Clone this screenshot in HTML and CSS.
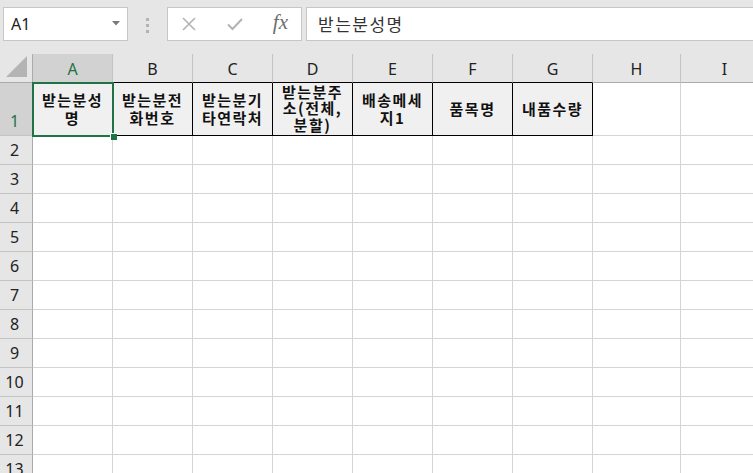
FILE: index.html
```html
<!DOCTYPE html>
<html>
<head>
  <link rel="stylesheet" href="styles.css">
</head>
<body>
  <div class="topbar">
    <div class="namebox">
      <span>A1</span>
      <svg class="caret" width="8" height="5" viewBox="0 0 8 5"><polygon points="0,0 8,0 4,4.5" fill="#7a7a7a"/></svg>
    </div>
    <div class="grip"><i></i><i></i><i></i></div>
    <div class="fbuttons">
      <svg width="16" height="16" viewBox="0 0 16 16"><path d="M2 2 L14 14 M14 2 L2 14" stroke="#b3b3b3" stroke-width="1.6" fill="none"/></svg>
      <svg width="18" height="16" viewBox="0 0 18 16"><path d="M2 8.5 L6.5 13 L16 3" stroke="#b3b3b3" stroke-width="2" fill="none"/></svg>
      <span class="fx">fx</span>
    </div>
    <div class="formula">받는분성명</div>
  </div>

  <div class="sheet">
    <div class="corner"><svg width="22" height="22" viewBox="0 0 22 22"><polygon points="21,0 21,21 0,21" fill="#b4b4b4"/></svg></div>
    <div class="ch sel">A</div>
    <div class="ch dark">B</div>
    <div class="ch dark">C</div>
    <div class="ch dark">D</div>
    <div class="ch dark">E</div>
    <div class="ch dark">F</div>
    <div class="ch dark">G</div>
    <div class="ch">H</div>
    <div class="ch">I</div>

    <div class="rh sel">1</div>
    <div class="hd active">받는분성<br>명</div>
    <div class="hd">받는분전<br>화번호</div>
    <div class="hd">받는분기<br>타연락처</div>
    <div class="hd tight">받는분주<br>소(전체,<br>분할)</div>
    <div class="hd">배송메세<br>지1</div>
    <div class="hd">품목명</div>
    <div class="hd">내품수량</div>
    <div class="c"></div><div class="c"></div>

    <div class="rh">2</div><div class="c"></div><div class="c"></div><div class="c"></div><div class="c"></div><div class="c"></div><div class="c"></div><div class="c"></div><div class="c"></div><div class="c"></div>
    <div class="rh">3</div><div class="c"></div><div class="c"></div><div class="c"></div><div class="c"></div><div class="c"></div><div class="c"></div><div class="c"></div><div class="c"></div><div class="c"></div>
    <div class="rh">4</div><div class="c"></div><div class="c"></div><div class="c"></div><div class="c"></div><div class="c"></div><div class="c"></div><div class="c"></div><div class="c"></div><div class="c"></div>
    <div class="rh">5</div><div class="c"></div><div class="c"></div><div class="c"></div><div class="c"></div><div class="c"></div><div class="c"></div><div class="c"></div><div class="c"></div><div class="c"></div>
    <div class="rh">6</div><div class="c"></div><div class="c"></div><div class="c"></div><div class="c"></div><div class="c"></div><div class="c"></div><div class="c"></div><div class="c"></div><div class="c"></div>
    <div class="rh">7</div><div class="c"></div><div class="c"></div><div class="c"></div><div class="c"></div><div class="c"></div><div class="c"></div><div class="c"></div><div class="c"></div><div class="c"></div>
    <div class="rh">8</div><div class="c"></div><div class="c"></div><div class="c"></div><div class="c"></div><div class="c"></div><div class="c"></div><div class="c"></div><div class="c"></div><div class="c"></div>
    <div class="rh">9</div><div class="c"></div><div class="c"></div><div class="c"></div><div class="c"></div><div class="c"></div><div class="c"></div><div class="c"></div><div class="c"></div><div class="c"></div>
    <div class="rh">10</div><div class="c"></div><div class="c"></div><div class="c"></div><div class="c"></div><div class="c"></div><div class="c"></div><div class="c"></div><div class="c"></div><div class="c"></div>
    <div class="rh">11</div><div class="c"></div><div class="c"></div><div class="c"></div><div class="c"></div><div class="c"></div><div class="c"></div><div class="c"></div><div class="c"></div><div class="c"></div>
    <div class="rh">12</div><div class="c"></div><div class="c"></div><div class="c"></div><div class="c"></div><div class="c"></div><div class="c"></div><div class="c"></div><div class="c"></div><div class="c"></div>
    <div class="rh">13</div><div class="c"></div><div class="c"></div><div class="c"></div><div class="c"></div><div class="c"></div><div class="c"></div><div class="c"></div><div class="c"></div><div class="c"></div>
  </div>
</body>
</html>
```

FILE: styles.css
```css
body {
  margin: 0;
  width: 753px;
  height: 473px;
  overflow: hidden;
  background: #fff;
  font-family: "Noto Sans", "Noto Sans CJK KR", sans-serif;
  color: #222;
}

.topbar {
  display: flex;
  align-items: flex-start;
  height: 54px;
  padding-top: 7px;
  box-sizing: border-box;
  background: #e6e6e6;
}

.namebox {
  display: flex;
  align-items: center;
  justify-content: space-between;
  width: 125px;
  height: 34px;
  margin-left: 3px;
  padding: 0 7px 0 7px;
  box-sizing: border-box;
  background: #fff;
  border: 1px solid #c6c6c6;
  font-size: 16px;
}

.caret {
  margin-top: -2px;
}

.grip {
  display: flex;
  flex-direction: column;
  gap: 3px;
  width: 39px;
  padding-top: 11px;
  align-items: center;
}

.grip i {
  width: 3px;
  height: 3px;
  background: #b3b3b3;
}

.fbuttons {
  display: flex;
  align-items: center;
  justify-content: space-between;
  width: 135px;
  height: 34px;
  padding: 0 13px 0 13px;
  box-sizing: border-box;
  background: #fff;
  border: 1px solid #c6c6c6;
}

.fx {
  font-family: "Liberation Serif", serif;
  font-style: italic;
  font-size: 21px;
  color: #6e6e6e;
  margin-top: -3px;
}

.formula {
  flex: 1;
  height: 34px;
  margin-left: 4px;
  padding-left: 11px;
  box-sizing: border-box;
  background: #fff;
  border: 1px solid #c6c6c6;
  border-right: none;
  font-family: "Noto Sans CJK KR", sans-serif;
  font-size: 17px;
  letter-spacing: 1.5px;
  line-height: 31px;
  color: #333;
}

.sheet {
  display: grid;
  grid-template-columns: 33px repeat(7, 80px) 88px 88px;
  grid-template-rows: 29px 53px;
  grid-auto-rows: 29px;
}

.sheet > div {
  box-sizing: border-box;
  border-right: 1px solid #d4d4d4;
  border-bottom: 1px solid #d4d4d4;
}

.sheet .corner {
  display: flex;
  justify-content: flex-end;
  align-items: flex-end;
  padding: 0 4px 4px 0;
  background: #e6e6e6;
  border-right: 1px solid #ababab;
  border-bottom: 1px solid #ababab;
}

.sheet .ch {
  display: flex;
  justify-content: center;
  align-items: center;
  background: #e6e6e6;
  border-right: 1px solid #c4c4c4;
  border-bottom: 1px solid #ababab;
  font-size: 16px;
  padding-top: 1px;
}

.sheet .ch.dark {
  border-bottom-color: #000;
}

.sheet .ch.sel {
  background: #d2d2d2;
  color: #217346;
  border-bottom-color: #217346;
}

.sheet .rh {
  display: flex;
  justify-content: center;
  align-items: center;
  background: #e6e6e6;
  border-right: 1px solid #ababab;
  border-bottom: 1px solid #c4c4c4;
  font-size: 16px;
  padding-right: 3px;
}

.sheet .rh.sel {
  align-items: flex-end;
  padding-bottom: 3px;
  background: #d2d2d2;
  color: #217346;
}

.sheet .hd {
  display: flex;
  justify-content: center;
  align-items: center;
  text-align: center;
  background: #f0f0f0;
  border-right: 1px solid #000;
  border-bottom: 1px solid #000;
  font-family: "Noto Sans CJK KR", sans-serif;
  font-weight: bold;
  font-size: 15px;
  letter-spacing: 1.5px;
  line-height: 18px;
  color: #111;
  padding-bottom: 1px;
}

.sheet .hd.tight {
  line-height: 16.5px;
}

.sheet .hd.active {
  position: relative;
  z-index: 1;
  outline: 2px solid #217346;
  outline-offset: -1px;
}

.sheet .hd.active::after {
  content: "";
  position: absolute;
  right: -5px;
  bottom: -5px;
  width: 6px;
  height: 6px;
  background: #217346;
  border-left: 1px solid #fff;
  border-top: 1px solid #fff;
}
```
